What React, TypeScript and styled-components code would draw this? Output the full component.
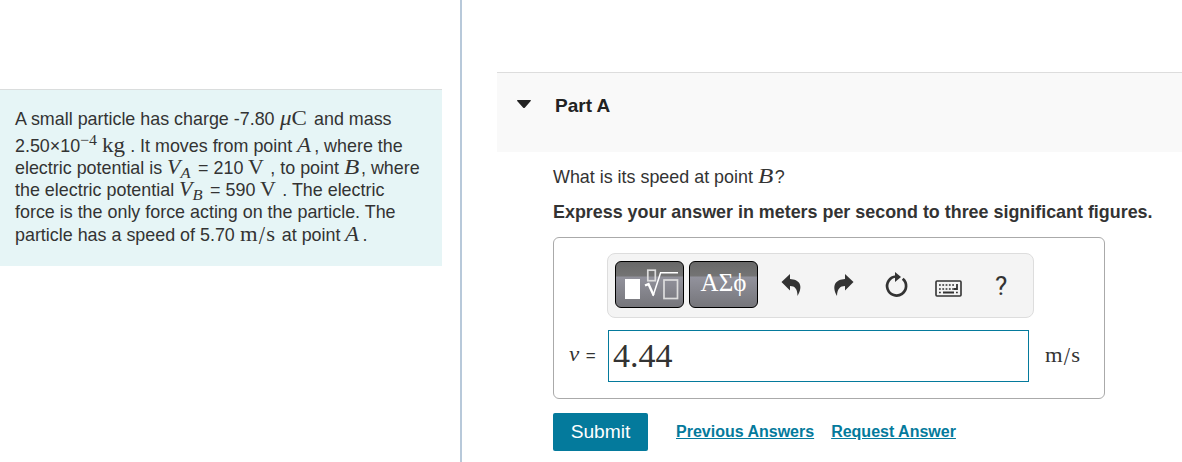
import React from "react";
import styled, { createGlobalStyle } from "styled-components";

const Global = createGlobalStyle`
  *{box-sizing:border-box}
  body{margin:0;background:#fff;color:#333;font-family:"Liberation Sans",Arial,sans-serif;font-size:17.9px;overflow:hidden}
`;
const Page = styled.main`display:flex;width:1182px;height:462px;overflow:hidden;`;
const ProblemPane = styled.aside`width:462px;flex:none;padding-top:89px;border-right:2px solid #b8c9da;`;
const ProblemCard = styled.section`width:442px;height:177px;background:#e6f5f6;border-top:1px solid #dadddd;padding:18px 0 0 15px;`;
const Line = styled.div<{ $h: number }>`
  height:${(p) => p.$h}px;line-height:22px;white-space:pre;
`;
const MathText = styled.span<{ $w: number; $size?: number; $italic?: boolean; $stretch?: number; $spacing?: number }>`
  display:inline-block;width:${(p) => p.$w}px;line-height:20px;letter-spacing:${(p) => p.$spacing ?? 0}px;
  font-family:"Liberation Serif","Times New Roman",serif;font-size:${(p) => p.$size ?? 20}px;
  font-style:${(p) => (p.$italic ? "italic" : "normal")};
  transform:scaleX(${(p) => p.$stretch ?? 1.15});transform-origin:left;
`;
const Sub = styled.span`position:relative;top:4px;font-size:15px;line-height:0;`;
const Sup = styled.span`position:relative;top:-7px;font-size:15px;line-height:0;`;
const Slash = styled.span`display:inline-block;line-height:20px;transform:translateY(1px) scaleY(1.3);`;

const AnswerPane = styled.section`flex:1;min-width:0;padding:72px 0 0 35px;`;
const PartHeader = styled.header`
  height:80px;background:#f9f9f9;border-top:1px solid #ddd;display:flex;align-items:flex-start;
  padding:21px 0 0 20px;font-size:19px;line-height:24px;font-weight:bold;color:#222;
  svg{margin:6px 24px 0 0;flex:none}
`;
const PartBody = styled.div`padding:14px 0 0 56px;`;
const Question = styled.p`margin:0;height:35px;line-height:22px;white-space:pre;`;
const Instruction = styled.p`margin:0;height:36px;line-height:22px;font-weight:bold;white-space:nowrap;`;
const AnswerBox = styled.div`width:552px;height:162px;border:1px solid #aaa;border-radius:6px;padding:15px 0 0 15px;`;
const Toolbar = styled.div`
  width:427px;height:65px;margin-left:38px;background:#f4f4f4;border:1px solid #ddd;border-radius:8px;
  display:flex;padding:7px;gap:5px;
`;
const PaletteButton = styled.button`
  width:69px;height:47px;padding:0;border:1px solid #000;border-radius:6px;color:#fff;
  background:linear-gradient(#686868 0,#747474 14px,#92929c 15px,#76767b 100%);
  font:25px/42px "Liberation Serif",serif;display:flex;justify-content:center;
`;
const Tools = styled.div`display:flex;margin-left:16px;padding-top:9px;color:#333;`;
const ToolButton = styled.button<{ $w: number }>`
  width:${(p) => p.$w}px;height:32px;padding:0;border:0;background:none;color:inherit;text-align:left;
  font:26px/28px Roboto,sans-serif;svg{display:block}
`;
const InputRow = styled.div`display:flex;margin-top:12px;height:52px;line-height:52px;`;
const VariableLabel = styled.label`width:39px;white-space:pre;font-size:17px;`;
const AnswerInput = styled.div`
  width:421px;height:52px;border:1px solid #047a9c;padding-left:4px;line-height:49px;
  font-family:"Liberation Serif",serif;font-size:34px;
`;
const Unit = styled(MathText)`margin-left:16px;line-height:51px;`;
const Actions = styled.div`display:flex;align-items:center;margin-top:14px;`;
const Submit = styled.button`
  width:95px;height:38px;margin-right:28px;border:0;border-radius:2px;background:#047a9c;color:#fff;
  font:19.2px "Liberation Sans",sans-serif;padding:0;
`;
const ActionLink = styled.a`
  margin-right:17px;color:#047a9c;font-size:16px;font-weight:bold;text-decoration:underline;white-space:nowrap;
`;

export default function App() {
  return (
    <>
      <Global />
      <Page>
        <ProblemPane>
          <ProblemCard>
            <Line $h={27}>A small particle has charge -7.80 <MathText $w={29.5}><i>μ</i>C</MathText> and mass</Line>
            <Line $h={22}>2.50×10<MathText $w={17} $size={16} $stretch={1.06}><Sup>−4</Sup></MathText> <MathText $w={23}>kg</MathText> . It moves from point <MathText $w={17} $italic>A</MathText>, where the</Line>
            <Line $h={22}>electric potential is <MathText $w={26} $italic $stretch={1.1}>V<Sub>A</Sub></MathText> = 210 <MathText $w={17} $stretch={1.1}>V</MathText> , to point <MathText $w={17} $italic $stretch={1.25}>B</MathText>, where</Line>
            <Line $h={22}>the electric potential <MathText $w={26} $italic $stretch={1.1}>V<Sub>B</Sub></MathText> = 590 <MathText $w={17} $stretch={1.1}>V</MathText> . The electric</Line>
            <Line $h={23}>force is the only force acting on the particle. The</Line>
            <Line $h={23}>particle has a speed of 5.70 <MathText $w={37} $stretch={1.13} $spacing={1}>m<Slash>/</Slash>s</MathText> at point <MathText $w={17} $italic>A</MathText>.</Line>
          </ProblemCard>
        </ProblemPane>
        <AnswerPane>
          <PartHeader>
            <svg width="14" height="8" viewBox="0 0 14 8"><path d="M.5 0h13q.8.6 0 1.2L8 7.4q-1 1-2 0L.4 1.2Q-.3.6.5 0Z" fill="#222" /></svg>
            Part A
          </PartHeader>
          <PartBody>
            <Question>What is its speed at point <MathText $w={17} $italic $stretch={1.25}>B</MathText>?</Question>
            <Instruction>Express your answer in meters per second to three significant figures.</Instruction>
            <AnswerBox>
              <Toolbar>
                <PaletteButton aria-label="Templates">
                  <svg width="67" height="45" viewBox="0 0 67 45" fill="none" stroke="#fff">
                    <rect x="9" y="17" width="15" height="20" fill="#fff" stroke="none" />
                    <rect x="31.8" y="8.2" width="7.5" height="10.5" stroke="#ddd" strokeWidth="1.7" />
                    <path d="m29 23.5 3.5-1.4 5 11" strokeWidth="2.4" />
                    <path d="m37 34 7.6-23.2H62" strokeWidth="1.5" />
                    <rect x="48" y="18" width="13.5" height="18.5" stroke="#ddd" strokeWidth="1.7" />
                  </svg>
                </PaletteButton>
                <PaletteButton>ΑΣϕ</PaletteButton>
                <Tools>
                  <ToolButton $w={52} aria-label="Undo">
                    <svg width="32" height="32" viewBox="0 0 32 32"><path d="M11 4v5C20 9.5 25 15 18.5 26 18.5 19 16 16 11 16v4.5L2.5 12Z" fill="currentColor" /></svg>
                  </ToolButton>
                  <ToolButton $w={53} aria-label="Redo">
                    <svg width="32" height="32" viewBox="0 0 32 32"><path d="M14 4v5C5 9.5 0 15 6 26 6.2 19 9 16 14 16v4.5L22.5 12Z" fill="currentColor" /></svg>
                  </ToolButton>
                  <ToolButton $w={51} aria-label="Reset">
                    <svg width="32" height="32" viewBox="0 0 32 32"><path d="M12 6.5A9.5 9.5 0 1 0 18.7 8.7" fill="none" stroke="currentColor" strokeWidth="2.7" /><path d="m11 2 6 5-6 5Z" fill="currentColor" /></svg>
                  </ToolButton>
                  <ToolButton $w={60} aria-label="Keyboard">
                    <svg width="32" height="32" viewBox="0 0 32 32" fill="none" stroke="currentColor"><rect x="1" y="11" width="25" height="15" rx="1" strokeWidth="1.6" /><path d="M4 15h15M4 19h15M4 22.5h2M21 22.5h2" strokeWidth="1.7" strokeDasharray="1.8 1.5" /><path d="M8 22.5h11M22 14v5h-3" strokeWidth="1.8" /></svg>
                  </ToolButton>
                  <ToolButton $w={20} aria-label="Help">?</ToolButton>
                </Tools>
              </Toolbar>
              <InputRow>
                <VariableLabel><MathText $w={12} $italic>v</MathText> =</VariableLabel>
                <AnswerInput>4.44</AnswerInput>
                <Unit $w={38} $stretch={1.13} $spacing={1}>m<Slash>/</Slash>s</Unit>
              </InputRow>
            </AnswerBox>
            <Actions>
              <Submit>Submit</Submit>
              <ActionLink>Previous Answers</ActionLink>
              <ActionLink>Request Answer</ActionLink>
            </Actions>
          </PartBody>
        </AnswerPane>
      </Page>
    </>
  );
}
